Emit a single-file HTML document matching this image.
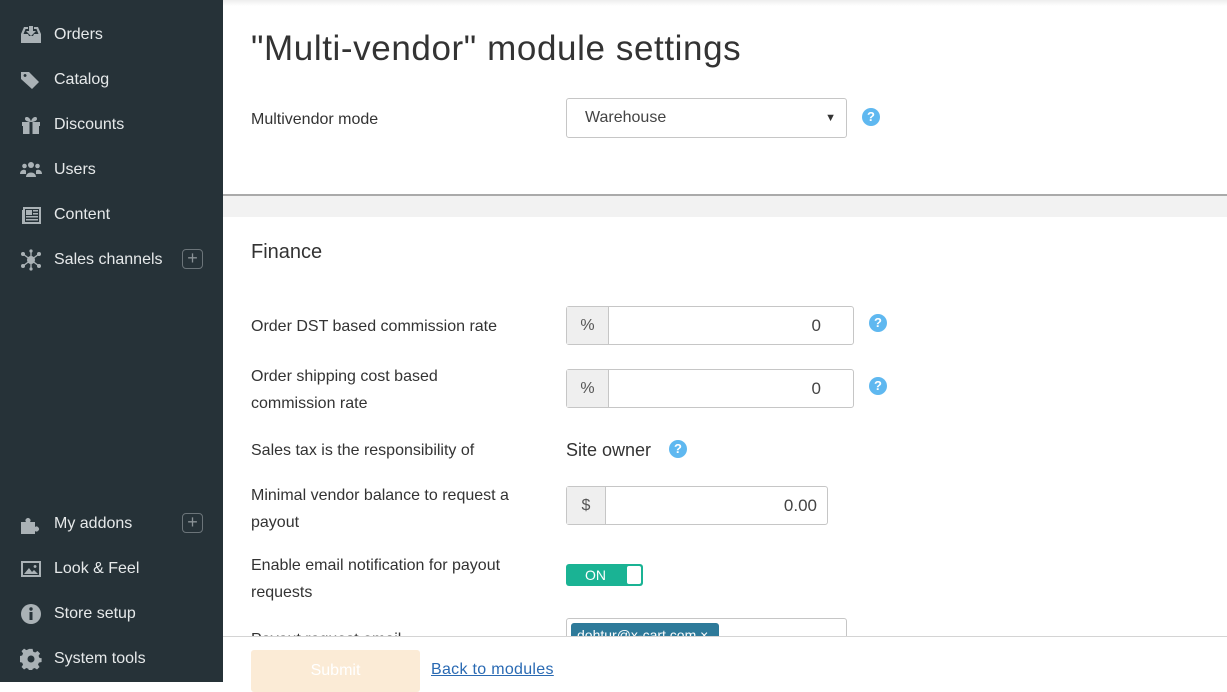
<!DOCTYPE html>
<html><head><style>
*{box-sizing:border-box;margin:0;padding:0}
body{width:1227px;height:682px;overflow:hidden;font-family:"Liberation Sans",sans-serif;background:#fff;position:relative;color:#333}
#sb{position:absolute;left:0;top:0;width:223px;height:682px;background:#263238}
.mi{position:absolute;left:20px;height:24px;display:flex;align-items:center;color:#e6e9ea;font-size:16px}
.mi svg{width:22px;height:22px;margin-right:12px;fill:#aab2b6}
.plus{position:absolute;left:182px;width:21px;height:20px;border:1.5px solid #6b7479;border-radius:4px;color:#8a9296;font-size:18px;line-height:16px;text-align:center}
.lbl{position:absolute;left:251px;font-size:16px;color:#333;line-height:27px}
.inp{position:absolute;border:1px solid #c6c6c6;border-radius:3px;background:#fff;display:flex;font-size:17px}
.inp .ad{background:#efefef;border-right:1px solid #c6c6c6;display:flex;align-items:center;justify-content:center;color:#555;font-size:16px}
.inp .v{flex:1;text-align:right;padding-right:32px;display:flex;align-items:center;justify-content:flex-end;color:#444}
.q{position:absolute;width:18px;height:18px;border-radius:50%;background:#5fb8f0;color:#fff;font-weight:bold;font-size:13px;text-align:center;line-height:18px}
</style></head><body>
<div id="sb">
<div class="mi" style="top:23px"><svg viewBox="0 0 22 22"><path d="M1 10l3-7h4v2H5.5L3.5 10H8l1 2h4l1-2h4.5l-2-5H14V3h4l3 7v9H1z M9 2h4v5h3l-5 5-5-5h3z"/></svg>Orders</div>
<div class="mi" style="top:68px"><svg viewBox="0 0 22 22"><path d="M1 3h8l10 10-7 7L1 10z M5 5a1.5 1.5 0 1 0 0.1 0z"/></svg>Catalog</div>
<div class="mi" style="top:113px"><svg viewBox="0 0 22 22"><path d="M2 8h18v4H2z M3 12h16v8H3z M7 3c2 0 4 3 4 5C9 8 5 7 5 5s1-2 2-2z M15 3c1 0 2 0 2 2s-4 3-6 3c0-2 2-5 4-5z"/><rect x="9.5" y="8" width="3" height="12" fill="#263238"/></svg>Discounts</div>
<div class="mi" style="top:158px"><svg viewBox="0 0 22 22"><circle cx="11" cy="6" r="3"/><circle cx="4.5" cy="7" r="2.3"/><circle cx="17.5" cy="7" r="2.3"/><path d="M6 18c0-6 10-6 10 0z M0 15c0-5 6-5 6-3v3z M22 15c0-5-6-5-6-3v3z"/></svg>Users</div>
<div class="mi" style="top:203px"><svg viewBox="0 0 22 22"><path d="M3 3h18v17H2V6h1z M5 5v13h14V5z M6 6h6v5H6z M13 6h5v1.5h-5z M13 9h5v1.5h-5z M6 12h12v1.5H6z M6 15h12v1.5H6z"/></svg>Content</div>
<div class="mi" style="top:248px"><svg viewBox="0 0 22 22"><circle cx="11" cy="11" r="4"/><circle cx="3" cy="5" r="2"/><circle cx="19" cy="5" r="2"/><circle cx="3" cy="17" r="2"/><circle cx="19" cy="17" r="2"/><circle cx="11" cy="2" r="1.6"/><circle cx="11" cy="20" r="1.6"/><path d="M3 5L19 17M19 5L3 17M11 2v18" stroke="#aab2b6" stroke-width="1.3"/></svg>Sales channels</div>
<div class="plus" style="top:249px">+</div>
<div class="mi" style="top:512px"><svg viewBox="0 0 22 22"><path d="M1 9h5a2.5 2.5 0 1 1 4 0h5v5a2.5 2.5 0 1 1 0 4v3H1z"/></svg>My addons</div>
<div class="plus" style="top:513px">+</div>
<div class="mi" style="top:557px"><svg viewBox="0 0 22 22"><path d="M1 3h20v16H1z M3 5v12h16V5z M4 16l5-6 3 4 2-2 4 4z M15 7a1.5 1.5 0 1 0 .1 0z"/></svg>Look &amp; Feel</div>
<div class="mi" style="top:602px"><svg viewBox="0 0 22 22"><circle cx="11" cy="11" r="10"/><rect x="9.5" y="9" width="3" height="8" fill="#263238"/><circle cx="11" cy="6" r="1.7" fill="#263238"/></svg>Store setup</div>
<div class="mi" style="top:647px"><svg viewBox="0 0 22 22"><path d="M9 1h4l.6 3 2.3 1 2.6-1.7 2.8 2.8L19.6 8.7l1 2.3 3 .6-.6 0v4l-3 .6-1 2.3 1.7 2.6-2.8 2.8-2.6-1.7-2.3 1-.6 3H9l-.6-3-2.3-1-2.6 1.7-2.8-2.8 1.7-2.6-1-2.3-3-.6V9l3-.6 1-2.3L.7 3.5 3.5.7 6.1 2.4 8.4 1.4z" transform="scale(.9) translate(1 0)"/><circle cx="11" cy="11" r="3.5" fill="#263238"/></svg>System tools</div>
</div>
<div style="position:absolute;left:223px;top:0;right:0;height:6px;background:linear-gradient(#eee,#fff)"></div>
<div style="position:absolute;left:251px;top:29px;font-size:35px;color:#333;letter-spacing:.6px">"Multi-vendor" module settings</div>
<div class="lbl" style="top:106px">Multivendor mode</div>
<div class="inp" style="left:566px;top:98px;width:281px;height:40px;align-items:center;padding-left:18px;font-size:16px;color:#444">Warehouse<span style="position:absolute;right:10px;font-size:11px;color:#333">▼</span></div>
<div class="q" style="left:862px;top:108px">?</div>
<div style="position:absolute;left:223px;top:194px;right:0;height:23px;background:#f2f2f2;border-top:2px solid #aaa"></div>
<div style="position:absolute;left:251px;top:241px;font-size:20px;color:#333">Finance</div>
<div class="lbl" style="top:313px">Order DST based commission rate</div>
<div class="inp" style="left:566px;top:306px;width:288px;height:39px"><div class="ad" style="width:42px">%</div><div class="v">0</div></div>
<div class="q" style="left:869px;top:314px">?</div>
<div class="lbl" style="top:363px">Order shipping cost based<br>commission rate</div>
<div class="inp" style="left:566px;top:369px;width:288px;height:39px"><div class="ad" style="width:42px">%</div><div class="v">0</div></div>
<div class="q" style="left:869px;top:377px">?</div>
<div class="lbl" style="top:437px">Sales tax is the responsibility of</div>
<div style="position:absolute;left:566px;top:440px;font-size:18px;color:#333">Site owner</div>
<div class="q" style="left:669px;top:440px">?</div>
<div class="lbl" style="top:482px">Minimal vendor balance to request a<br>payout</div>
<div class="inp" style="left:566px;top:486px;width:262px;height:39px"><div class="ad" style="width:39px">$</div><div class="v" style="padding-right:10px">0.00</div></div>
<div class="lbl" style="top:552px">Enable email notification for payout<br>requests</div>
<div style="position:absolute;left:566px;top:564px;width:77px;height:22px;background:#1ab394;border-radius:3px;color:#fff;font-size:14px;line-height:22px;padding-left:19px">ON<div style="position:absolute;right:2px;top:2px;width:14px;height:18px;background:#fff;border-radius:2px"></div></div>
<div class="lbl" style="top:626px">Payout request email</div>
<div class="inp" style="left:566px;top:618px;width:281px;height:40px"><div style="margin:4px;background:#2e7a9a;color:#fff;font-size:14px;padding:4px 6px;height:26px;border-radius:3px;width:148px">dohtur@x-cart.com ×</div></div>
<div style="position:absolute;left:223px;top:636px;right:0;bottom:0;background:#fff;border-top:1px solid #d4d4d4"></div>
<div style="position:absolute;left:251px;top:650px;width:169px;height:42px;background:#fbebd6;border-radius:3px;color:#fff;font-size:16px;text-align:center;line-height:42px">Submit</div>
<div style="position:absolute;left:431px;top:661px;font-size:16px;color:#2a6ab3;text-decoration:underline;letter-spacing:.3px">Back to modules</div>
</body></html>
